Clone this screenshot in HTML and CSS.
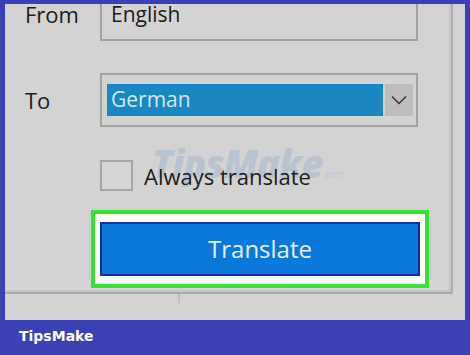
FILE: index.html
```html
<!DOCTYPE html>
<html>
<head>
    <meta charset='utf-8'>
    <title>Translate</title>
    <link rel="stylesheet" href="styles.css">
</head>
<body>
    <div class='frame'>
        <div class='panel'>
            <div class='content'>
                <div class='form'>
                    <div class='label'>From</div>
                    <div class='box'><span class='value'>English</span></div>

                    <div class='label'>To</div>
                    <div class='box select'>
                        <div class='selected'>German</div>
                        <div class='arrow'>
                            <svg width="16" height="10" viewBox="0 0 16 10">
                                <path d="M1 1.5 L8 8.5 L15 1.5" fill="none" stroke="#333" stroke-width="1.4"/>
                            </svg>
                        </div>
                    </div>

                    <div></div>
                    <div class='check-row'>
                        <div class='checkbox'></div>
                        <span>Always translate</span>
                    </div>
                </div>

                <div class='highlight'>
                    <div class='translate'>Translate</div>
                </div>

                <div class='watermark'>TipsMake<small>.com</small></div>
            </div>
            <div class='strip'><div class='strip-cell'></div></div>
        </div>
        <div class='footer'>TipsMake</div>
    </div>
</body>
</html>
```

FILE: styles.css
```css
body {
    margin: 0;
    padding: 0;
    font-family: "Open Sans", sans-serif;
}
.frame {
    width: 470px;
    height: 355px;
    background-color: #3b40b4;
    padding: 4px 5px 0 5px;
    box-sizing: border-box;
}
.panel {
    width: 460px;
    height: 316px;
    background-color: #d3d3d3;
    overflow: hidden;
}
.content {
    position: relative;
    width: 446px;
    height: 305px;
    border-right: 2px solid #b0b0b0;
    border-bottom: 2px solid #a9a9a9;
    box-shadow: inset -2px -2px 0 #c6c6c6;
}
.form {
    display: grid;
    grid-template-columns: 75px 318px;
    row-gap: 32px;
    align-items: center;
    padding-left: 20px;
    margin-top: -17px;
}
.label {
    font-size: 22px;
    color: #1c1c1c;
}
.box {
    box-sizing: border-box;
    height: 54px;
    border: 2px solid #a2a2a2;
    display: flex;
    align-items: center;
    padding-left: 9px;
    font-size: 21px;
    color: #1c1c1c;
}
.value {
    margin-top: -1px;
}
.select {
    padding: 0 3px 0 5px;
    gap: 2px;
}
.selected {
    width: 276px;
    height: 32px;
    background-color: #1a86c1;
    color: #d2ebf7;
    padding-left: 4px;
    box-sizing: border-box;
    line-height: 31px;
}
.arrow {
    width: 28px;
    height: 32px;
    background-color: #bdbdbd;
    display: flex;
    justify-content: center;
    align-items: center;
}
.check-row {
    position: relative;
    z-index: 1;
    display: flex;
    align-items: center;
    gap: 11px;
    font-size: 22px;
    color: #1c1c1c;
    margin-top: 1px;
}
.checkbox {
    width: 33px;
    height: 31px;
    box-sizing: border-box;
    border: 2px solid #a5a5a5;
    background-color: #d6d6d6;
}
.highlight {
    box-sizing: border-box;
    width: 338px;
    height: 78px;
    margin: 19px 0 0 86px;
    border: 4px solid #36e236;
    background-color: #ffffff;
    padding: 8px 5px 0 5px;
}
.translate {
    box-sizing: border-box;
    width: 320px;
    height: 54px;
    background-color: #0a78d8;
    border: 2px solid #1b2aa8;
    color: #e4f2ff;
    font-size: 24px;
    display: flex;
    justify-content: center;
    align-items: center;
    padding-bottom: 2px;
}
.watermark {
    position: absolute;
    left: 147px;
    top: 150px;
    font-size: 38px;
    font-weight: 800;
    font-style: italic;
    color: rgba(120, 155, 210, 0.28);
    letter-spacing: -1px;
}
.watermark small {
    font-size: 10px;
    font-style: normal;
    font-weight: 400;
    letter-spacing: 0;
}
.strip {
    height: 9px;
    display: flex;
}
.strip-cell {
    width: 173px;
    border-right: 2px solid #bebebe;
}
.footer {
    font-family: "DejaVu Sans", sans-serif;
    font-weight: bold;
    font-size: 14px;
    color: #ffffff;
    padding: 8px 0 0 14px;
}
```
